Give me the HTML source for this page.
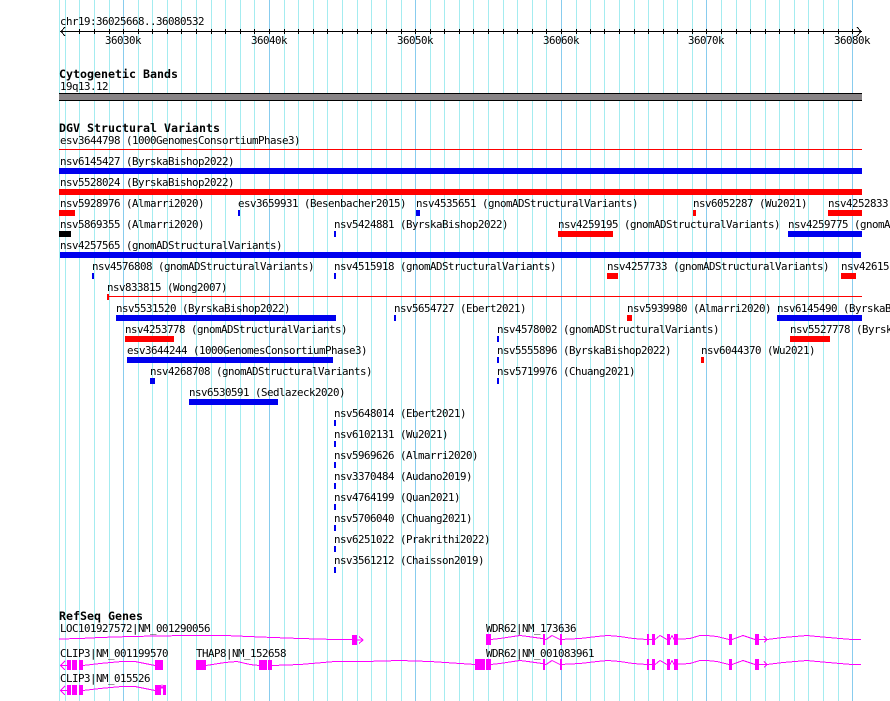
<!DOCTYPE html>
<html>
<head>
<meta charset="utf-8">
<style>
html,body{margin:0;padding:0;background:#fff;width:890px;height:701px;overflow:hidden}
svg{display:block}
text{font-family:"DejaVu Sans Mono","Liberation Mono",monospace;font-size:10.8px;letter-spacing:-0.5px;fill:#000;white-space:pre}
text.t{font-size:11.63px;letter-spacing:0;font-weight:bold}
polyline,.ln{fill:none;stroke:#f0f;stroke-width:1;shape-rendering:crispEdges}
</style>
</head>
<body>
<svg width="890" height="701" viewBox="0 0 890 701" xmlns="http://www.w3.org/2000/svg">
<path fill="none" stroke="#a4ecf0" stroke-width="1" shape-rendering="crispEdges" d="M59.5 0V701M65.5 0V701M79.5 0V701M94.5 0V701M109.5 0V701M138.5 0V701M152.5 0V701M167.5 0V701M181.5 0V701M196.5 0V701M211.5 0V701M225.5 0V701M240.5 0V701M254.5 0V701M284.5 0V701M298.5 0V701M313.5 0V701M327.5 0V701M342.5 0V701M357.5 0V701M371.5 0V701M386.5 0V701M401.5 0V701M430.5 0V701M444.5 0V701M459.5 0V701M473.5 0V701M488.5 0V701M503.5 0V701M517.5 0V701M532.5 0V701M546.5 0V701M576.5 0V701M590.5 0V701M604.5 0V701M619.5 0V701M634.5 0V701M648.5 0V701M663.5 0V701M677.5 0V701M692.5 0V701M721.5 0V701M736.5 0V701M750.5 0V701M765.5 0V701M779.5 0V701M794.5 0V701M808.5 0V701M823.5 0V701M838.5 0V701"/>
<path fill="none" stroke="#88ccee" stroke-width="1" shape-rendering="crispEdges" d="M123.5 0V701M269.5 0V701M415.5 0V701M561.5 0V701M706.5 0V701M852.5 0V701"/>

<!-- ruler -->
<rect x="60" y="31" width="802" height="1" fill="#000" shape-rendering="crispEdges"/>
<path fill="none" stroke="#000" shape-rendering="crispEdges" d="M79.5 29V34M94.5 29V34M109.5 29V34M123.5 29V34M138.5 29V34M152.5 29V34M167.5 29V34M181.5 29V34M196.5 29V34M211.5 29V34M225.5 29V34M240.5 29V34M254.5 29V34M269.5 29V34M284.5 29V34M298.5 29V34M313.5 29V34M327.5 29V34M342.5 29V34M357.5 29V34M371.5 29V34M386.5 29V34M401.5 29V34M415.5 29V34M430.5 29V34M444.5 29V34M459.5 29V34M473.5 29V34M488.5 29V34M503.5 29V34M517.5 29V34M532.5 29V34M546.5 29V34M561.5 29V34M576.5 29V34M590.5 29V34M604.5 29V34M619.5 29V34M634.5 29V34M648.5 29V34M663.5 29V34M677.5 29V34M692.5 29V34M706.5 29V34M721.5 29V34M736.5 29V34M750.5 29V34M765.5 29V34M779.5 29V34M794.5 29V34M808.5 29V34M823.5 29V34M838.5 29V34M852.5 29V34"/>
<path fill="none" stroke="#000" shape-rendering="crispEdges" d="M65 27L61 31.5L65 36M857 27L861 31.5L857 36"/>
<text x="60" y="25">chr19:36025668..36080532</text>
<text x="105" y="44">36030k</text>
<text x="251" y="44">36040k</text>
<text x="397" y="44">36050k</text>
<text x="543" y="44">36060k</text>
<text x="688" y="44">36070k</text>
<text x="834" y="44">36080k</text>

<!-- cytoband -->
<text class="t" x="59" y="78">Cytogenetic Bands</text>
<text x="60" y="90">19q13.12</text>
<rect x="59" y="93" width="803" height="8" fill="#000" shape-rendering="crispEdges"/>
<rect x="59" y="94" width="803" height="6" fill="#888486" shape-rendering="crispEdges"/>

<!-- DGV -->
<text class="t" x="59" y="132">DGV Structural Variants</text>
<text x="60" y="144">esv3644798 (1000GenomesConsortiumPhase3)</text>
<text x="60" y="165">nsv6145427 (ByrskaBishop2022)</text>
<text x="60" y="186">nsv5528024 (ByrskaBishop2022)</text>
<text x="60" y="207">nsv5928976 (Almarri2020)</text>
<text x="238" y="207">esv3659931 (Besenbacher2015)</text>
<text x="416" y="207">nsv4535651 (gnomADStructuralVariants)</text>
<text x="693" y="207">nsv6052287 (Wu2021)</text>
<text x="828" y="207">nsv4252833</text>
<text x="60" y="228">nsv5869355 (Almarri2020)</text>
<text x="334" y="228">nsv5424881 (ByrskaBishop2022)</text>
<text x="558" y="228">nsv4259195 (gnomADStructuralVariants)</text>
<text x="788" y="228">nsv4259775 (gnomADStructuralVariants)</text>
<text x="60" y="249">nsv4257565 (gnomADStructuralVariants)</text>
<text x="92" y="270">nsv4576808 (gnomADStructuralVariants)</text>
<text x="334" y="270">nsv4515918 (gnomADStructuralVariants)</text>
<text x="607" y="270">nsv4257733 (gnomADStructuralVariants)</text>
<text x="841" y="270">nsv4261513</text>
<text x="107" y="291">nsv833815 (Wong2007)</text>
<text x="116" y="312">nsv5531520 (ByrskaBishop2022)</text>
<text x="394" y="312">nsv5654727 (Ebert2021)</text>
<text x="627" y="312">nsv5939980 (Almarri2020)</text>
<text x="777" y="312">nsv6145490 (ByrskaBishop2022)</text>
<text x="125" y="333">nsv4253778 (gnomADStructuralVariants)</text>
<text x="497" y="333">nsv4578002 (gnomADStructuralVariants)</text>
<text x="790" y="333">nsv5527778 (ByrskaBishop2022)</text>
<text x="127" y="354">esv3644244 (1000GenomesConsortiumPhase3)</text>
<text x="497" y="354">nsv5555896 (ByrskaBishop2022)</text>
<text x="701" y="354">nsv6044370 (Wu2021)</text>
<text x="150" y="375">nsv4268708 (gnomADStructuralVariants)</text>
<text x="497" y="375">nsv5719976 (Chuang2021)</text>
<text x="189" y="396">nsv6530591 (Sedlazeck2020)</text>
<text x="334" y="417">nsv5648014 (Ebert2021)</text>
<text x="334" y="438">nsv6102131 (Wu2021)</text>
<text x="334" y="459">nsv5969626 (Almarri2020)</text>
<text x="334" y="480">nsv3370484 (Audano2019)</text>
<text x="334" y="501">nsv4764199 (Quan2021)</text>
<text x="334" y="522">nsv5706040 (Chuang2021)</text>
<text x="334" y="543">nsv6251022 (Prakrithi2022)</text>
<text x="334" y="564">nsv3561212 (Chaisson2019)</text>

<g shape-rendering="crispEdges" fill="#0000ee">
<rect x="59" y="168" width="803" height="6"/>
<rect x="238" y="210" width="2" height="6"/>
<rect x="416" y="210" width="4" height="6"/>
<rect x="334" y="231" width="2" height="6"/>
<rect x="788" y="231" width="74" height="6"/>
<rect x="60" y="252" width="801" height="6"/>
<rect x="92" y="273" width="2" height="6"/>
<rect x="334" y="273" width="2" height="6"/>
<rect x="116" y="315" width="220" height="6"/>
<rect x="394" y="315" width="2" height="6"/>
<rect x="777" y="315" width="85" height="6"/>
<rect x="497" y="336" width="2" height="6"/>
<rect x="127" y="357" width="206" height="6"/>
<rect x="497" y="357" width="2" height="6"/>
<rect x="150" y="378" width="5" height="6"/>
<rect x="497" y="378" width="2" height="6"/>
<rect x="189" y="399" width="89" height="6"/>
<rect x="334" y="420" width="2" height="6"/>
<rect x="334" y="441" width="2" height="6"/>
<rect x="334" y="462" width="2" height="6"/>
<rect x="334" y="483" width="2" height="6"/>
<rect x="334" y="504" width="2" height="6"/>
<rect x="334" y="525" width="2" height="6"/>
<rect x="334" y="546" width="2" height="6"/>
<rect x="334" y="567" width="2" height="6"/>
</g>
<g shape-rendering="crispEdges" fill="#ff0000">
<rect x="59" y="149" width="803" height="1"/>
<rect x="59" y="189" width="803" height="6"/>
<rect x="59" y="210" width="16" height="6"/>
<rect x="693" y="210" width="3" height="6"/>
<rect x="828" y="210" width="34" height="6"/>
<rect x="558" y="231" width="55" height="6"/>
<rect x="607" y="273" width="11" height="6"/>
<rect x="841" y="273" width="15" height="6"/>
<rect x="107" y="294" width="2" height="6"/>
<rect x="109" y="296" width="753" height="1"/>
<rect x="627" y="315" width="5" height="6"/>
<rect x="125" y="336" width="49" height="6"/>
<rect x="790" y="336" width="40" height="6"/>
<rect x="701" y="357" width="3" height="6"/>
</g>
<rect x="59" y="231" width="12" height="6" fill="#000" shape-rendering="crispEdges"/>

<!-- genes -->
<text class="t" x="59" y="620">RefSeq Genes</text>
<text x="60" y="632">LOC101927572|NM_001290056</text>
<text x="486" y="632">WDR62|NM_173636</text>
<text x="60" y="657">CLIP3|NM_001199570</text>
<text x="196" y="657">THAP8|NM_152658</text>
<text x="486" y="657">WDR62|NM_001083961</text>
<text x="60" y="682">CLIP3|NM_015526</text>

<!-- LOC -->
<polyline points="59,639 80,638.5 100,637.5 130,636.5 186,635.5 225,635.5 260,637 300,638.5 335,639.5 352,639.5"/>
<rect x="352" y="635" width="5" height="10" fill="#f0f" shape-rendering="crispEdges"/>
<path class="ln" d="M357 640H363M359 636.5L363 640L359 643.5"/>

<!-- WDR62 rows -->
<g>
<polyline points="491,639.5 500,638.5 513,636.5 520,635.5 528,636.5 542,638.5 546,639.5 552,635.5 560,639.5 580,638.5 597,636.5 608,635.5 620,636.5 633,638.5 647,639.5 655,639.5 660,635.5 667,639.5 670,639.5 672,635.5 674,639.5 690,638.5 700,635.5 707,635.5 717,636.5 729,639.5 732,639.5 743,635.5 755,639.5 767,639.5 783,637.5 807,635.5 817,636.5 840,638.5 852,639.5 861,639.5"/>
<path class="ln" d="M764 636.5L767 639.5L764 642.5"/>
<g fill="#f0f" shape-rendering="crispEdges">
<rect x="486" y="634" width="5" height="11"/>
<rect x="543" y="634" width="2" height="11"/>
<rect x="560" y="634" width="2" height="11"/>
<rect x="647" y="634" width="2" height="11"/>
<rect x="652" y="634" width="3" height="11"/>
<rect x="667" y="634" width="3" height="11"/>
<rect x="674" y="634" width="4" height="11"/>
<rect x="729" y="634" width="3" height="11"/>
<rect x="755" y="634" width="4" height="11"/>
</g>
</g>
<g transform="translate(0,25)">
<polyline points="491,639.5 500,638.5 513,636.5 520,635.5 528,636.5 542,638.5 546,639.5 552,635.5 560,639.5 580,638.5 597,636.5 608,635.5 620,636.5 633,638.5 647,639.5 655,639.5 660,635.5 667,639.5 670,639.5 672,635.5 674,639.5 690,638.5 700,635.5 707,635.5 717,636.5 729,639.5 732,639.5 743,635.5 755,639.5 767,639.5 783,637.5 807,635.5 817,636.5 840,638.5 852,639.5 861,639.5"/>
<path class="ln" d="M764 636.5L767 639.5L764 642.5"/>
<g fill="#f0f" shape-rendering="crispEdges">
<rect x="475" y="634" width="10" height="11"/>
<rect x="486" y="634" width="5" height="11"/>
<rect x="543" y="634" width="2" height="11"/>
<rect x="560" y="634" width="2" height="11"/>
<rect x="647" y="634" width="2" height="11"/>
<rect x="652" y="634" width="3" height="11"/>
<rect x="667" y="634" width="3" height="11"/>
<rect x="674" y="634" width="4" height="11"/>
<rect x="729" y="634" width="3" height="11"/>
<rect x="755" y="634" width="4" height="11"/>
</g>
</g>

<!-- CLIP3 1 -->
<path class="ln" d="M65 661L60.5 665.5L65 670M61 665.5H67"/>
<polyline points="83,665.5 100,663.5 122,661.5 135,661.5 150,664.5 155,665.5"/>
<g fill="#f0f" shape-rendering="crispEdges">
<rect x="67" y="660" width="4" height="10"/>
<rect x="72" y="660" width="5" height="10"/>
<rect x="79" y="660" width="4" height="10"/>
<rect x="155" y="660" width="8" height="10"/>
</g>
<!-- CLIP3 2 -->
<path class="ln" d="M65 686L60.5 690.5L65 695M61 690.5H67"/>
<polyline points="83,690.5 100,688.5 122,686.5 135,686.5 150,689.5 155,690.5"/>
<path class="ln" d="M161 689L162 685.5L163 689"/>
<g fill="#f0f" shape-rendering="crispEdges">
<rect x="67" y="685" width="4" height="10"/>
<rect x="72" y="685" width="5" height="10"/>
<rect x="79" y="685" width="4" height="10"/>
<rect x="155" y="685" width="6" height="10"/>
<rect x="163" y="685" width="3" height="10"/>
</g>
<!-- THAP8 -->
<polyline points="206,665.5 225,662.5 237,661.5 250,664.5 259,665.5"/>
<polyline points="272,665.5 300,664.5 335,661.5 365,661.5 400,660.5 430,661.5 460,663.5 475,664.5"/>
<g fill="#f0f" shape-rendering="crispEdges">
<rect x="196" y="660" width="10" height="10"/>
<rect x="259" y="660" width="8" height="10"/>
<rect x="268" y="660" width="4" height="10"/>
</g>
</svg>
</body>
</html>
